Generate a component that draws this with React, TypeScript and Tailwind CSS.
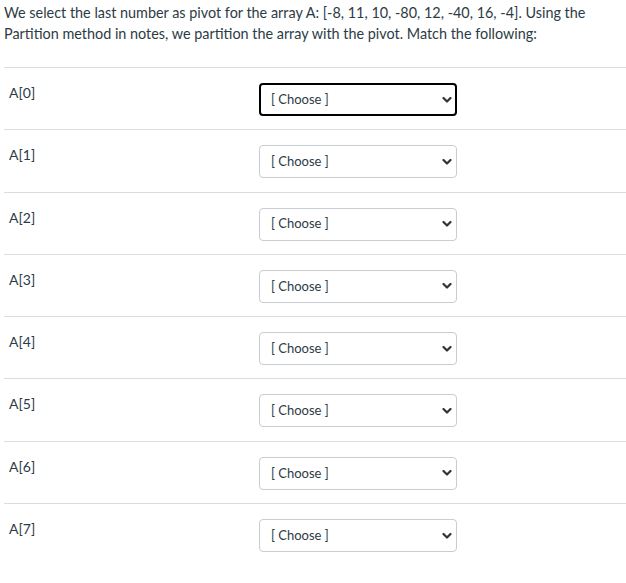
import { useState } from "react";

const ROWS = ["A[0]", "A[1]", "A[2]", "A[3]", "A[4]", "A[5]", "A[6]", "A[7]"];

function Chevron() {
  return (
    <svg width="10" height="7" viewBox="0 0 10 7" className="pointer-events-none absolute right-[5px] top-1/2 -translate-y-1/2">
      <path d="M1.5 1.5 L5 5 L8.5 1.5" fill="none" stroke="#333" strokeWidth="2.2" strokeLinecap="round" strokeLinejoin="round" />
    </svg>
  );
}

function MatchRow({ label, focused }: { label: string; focused: boolean }) {
  const [value, setValue] = useState("");
  return (
    <div className="flex h-[62.3px] border-t border-[#dcdcdc]">
      <div className="w-[255px] pl-[5px] pt-[15px] text-[14px] leading-[20px]">{label}</div>
      <div className="relative mt-[15px] h-[33px] w-[198px]">
        <select
          value={value}
          onChange={(e) => setValue(e.target.value)}
          className={
            "h-full w-full appearance-none rounded-[4px] bg-white text-[13px] text-[#2d3b45] outline-none " +
            (focused ? "border-2 border-black pl-[10px]" : "border border-[#c7cdd1] pl-[11px]")
          }
        >
          <option value="">[ Choose ]</option>
          <option value="-8">-8</option>
          <option value="11">11</option>
          <option value="10">10</option>
          <option value="-80">-80</option>
          <option value="12">12</option>
          <option value="-40">-40</option>
          <option value="16">16</option>
          <option value="-4">-4</option>
        </select>
        <Chevron />
      </div>
    </div>
  );
}

export default function App() {
  return (
    <div className="min-h-[583px] bg-white pl-[4px] font-['Lato',sans-serif] text-[#2d3b45]">
      <p className="pt-[2px] pb-[23px] text-[14.4px] leading-[21px]">
        We select the last number as pivot for the array A: [-8, 11, 10, -80, 12, -40, 16, -4]. Using the
        <br />
        Partition method in notes, we partition the array with the pivot. Match the following:
      </p>
      {ROWS.map((r, i) => (
        <MatchRow key={r} label={r} focused={i === 0} />
      ))}
    </div>
  );
}
